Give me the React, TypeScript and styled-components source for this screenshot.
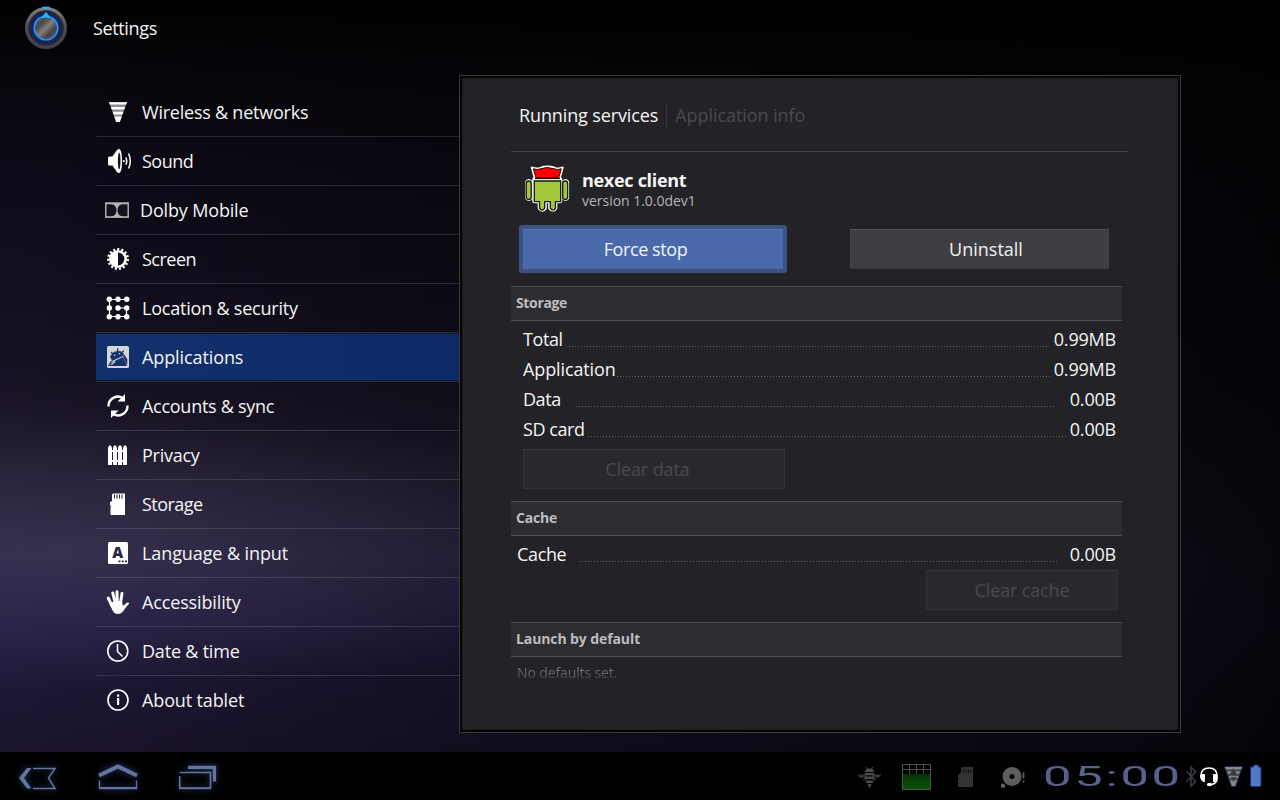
import React from 'react';
import styled, { createGlobalStyle } from 'styled-components';

const Global = createGlobalStyle`
  *{box-sizing:border-box}
  body{margin:0;background:#000;font-family:"Open Sans","Noto Sans",sans-serif;color:#f4f4f4;}
`;

const Screen = styled.div`
  width:1280px;height:800px;display:flex;flex-direction:column;overflow:hidden;
  background:
    radial-gradient(ellipse 680px 140px at 60px 550px,rgba(84,78,112,.36),transparent),
    linear-gradient(90deg,rgba(0,0,0,0) 0,rgba(0,0,0,.08) 120px,rgba(0,0,0,.34) 450px,rgba(0,0,0,.72) 1180px,rgba(0,0,0,.8) 1280px),
    linear-gradient(180deg,#000 0,#07060b 70px,#0e0b19 180px,#171223 380px,#211b30 470px,#27213f 560px,#251d42 620px,#1e1735 690px,#1b142d 752px);
`;

const Header = styled.header`
  height:57px;display:flex;align-items:center;padding:0 0 2px 24px;gap:25px;flex:none;
`;
const HeaderTitle = styled.h1`font-size:18px;font-weight:400;margin:0;line-height:24px;letter-spacing:-.36px;`;

const Main = styled.main`flex:1;display:flex;padding:18px 99px 0 96px;align-items:flex-start;`;
const Nav = styled.nav`width:363px;padding-top:13px;`;
const NavRow = styled.a<{ $on?: boolean }>`
  height:49px;display:flex;align-items:center;padding:0 0 1px 8px;font-size:18px;
  border-bottom:1px solid rgba(255,255,255,.13);
  ${p => p.$on && 'background:linear-gradient(90deg,#12306c,#0b2a66);border-bottom-color:#2b2f42;box-shadow:inset 0 1px #10162a,inset 0 -1px #10162a;'}
  &:last-child{border-bottom:0;}
`;
const NavText = styled.span<{ $shift?: number; $track: number }>`
  margin-left:${p => 10 + (p.$shift || 0)}px;letter-spacing:${p => p.$track}px;line-height:24px;white-space:nowrap;
`;

const Panel = styled.section`
  width:722px;height:658px;border:1px solid #3a3a3c;background:#232327;
  box-shadow:inset 0 0 0 2px #060607,inset 0 0 0 3px #1b1b1e;padding:0 52px 0 51px;
`;
const Tabs = styled.div`
  height:76px;border-bottom:1px solid #434346;display:flex;align-items:center;padding:2px 0 0 8px;
  font-size:18px;line-height:24px;letter-spacing:-.12px;
`;
const Tab = styled.span<{ $dim?: boolean }>`
  color:${p => (p.$dim ? '#4a4a4c' : '#f4f4f4')};
  ${p => p.$dim && 'border-left:1px solid #38383b;padding-left:8px;margin-left:8px;letter-spacing:-.06px;'}
`;
const Body = styled.div`width:611px;`;
const AppHead = styled.div`display:flex;height:73px;padding:12px 0 0 12px;gap:11px;`;
const AppName = styled.div`font-size:18px;font-weight:700;line-height:24px;margin-top:4px;letter-spacing:-.3px;`;
const AppVersion = styled.div`font-size:14px;line-height:18px;color:#b4b4b6;letter-spacing:-.03px;`;

const Button = styled.button<{ $kind: 'focus' | 'plain' | 'off'; $w: number; $nudge?: number; $track?: number }>`
  width:${p => p.$w}px;height:40px;font:inherit;font-size:18px;border:1px solid;display:block;
  padding:0 ${p => Math.max(0, -(p.$nudge || 0))}px 0 ${p => Math.max(0, p.$nudge || 0)}px;
  letter-spacing:${p => p.$track || 0}px;
  ${p => p.$kind === 'focus' && 'background:#4a69ab;color:#f1f3f8;border-color:#5878ad #4c6baa #4c6baa;box-shadow:0 0 0 4px #3b5283;border-radius:1px;outline:0;'}
  ${p => p.$kind === 'plain' && 'background:#3f3e43;color:#f1f1f1;border-color:#525156 #444348 #39383d;'}
  ${p => p.$kind === 'off' && 'background:#29282d;color:#4a4a4c;border-color:#38373b #333237 #333237;'}
`;
const Actions = styled.div`display:flex;justify-content:space-between;padding:4px 13px 0 12px;height:61px;`;
const Section = styled.h2<{ $track?: number }>`
  margin:0;height:35px;border:solid #4e4e51;border-width:1px 0;background:#2d2c30;
  font-size:14px;font-weight:700;color:#bdbdbf;padding-left:5px;line-height:32px;letter-spacing:${p => p.$track ?? -0.22}px;
`;
const Rows = styled.div`padding:3px 6px 0 12px;`;
const Row = styled.div`height:30px;display:flex;font-size:18px;line-height:30px;white-space:nowrap;`;
const Key = styled.span<{ $w: number; $track?: number }>`width:${p => p.$w}px;flex:none;letter-spacing:${p => p.$track ?? -0.35}px;`;
const Dots = styled.i<{ $w: number }>`
  width:${p => p.$w}px;height:1px;margin-top:22px;
  background:repeating-linear-gradient(90deg,#626265 0 1px,transparent 1px 3px);
`;
const Value = styled.span`margin-left:auto;letter-spacing:-.2px;`;
const ClearData = styled.div`padding:5px 0 0 12px;height:57px;`;
const CacheRow = styled.div`padding:3px 6px 1px 6px;`;
const ClearCache = styled.div`display:flex;justify-content:flex-end;padding-right:4px;height:52px;`;
const Note = styled.div`
  font-size:14px;line-height:20px;padding:6px 0 0 6px;height:27px;overflow:hidden;letter-spacing:-.12px;
  color:transparent;background:linear-gradient(180deg,#8a8a8c 8px,#545456 19px,#232327 27px);
  background-clip:text;-webkit-background-clip:text;
`;

const Bar = styled.footer`height:48px;background:#000;display:flex;flex:none;justify-content:space-between;`;
const Keys = styled.div`display:flex;svg{filter:drop-shadow(0 0 3px rgba(50,90,170,.75));}`;
const Status = styled.div`display:flex;`;
const Clock = styled.div`width:144px;height:48px;margin-left:-3px;padding-left:1px;overflow:hidden;`;
const ClockText = styled.span`
  display:block;font-family:Roboto,sans-serif;font-weight:400;font-size:28px;line-height:50px;
  letter-spacing:1.5px;color:#56638a;white-space:nowrap;transform:scaleX(1.81);transform-origin:0 0;
`;

const Glyph = ({ children }: { children: React.ReactNode }) => (
  <svg width="28" height="28" viewBox="0 0 28 28" fill="#fff">{children}</svg>
);

const WifiIcon = () => (
  <Glyph>
    <path d="M5 4h18l-7.200 20h-3.600z" fill="#8c8c92" />
    <path d="M5 4.200h18l-.7 2.300H5.700zM6.800 9h14.400l-.9 2.600H7.700zM8.600 13.800h10.800l-.9 2.600H9.500zM10.200 18.400h7.600l-2 5.600h-3.600z" />
  </Glyph>
);
const SoundIcon = () => (
  <Glyph>
    <path d="M4 11q0-1.500 1.500-1.500H8.500L13 3q1-1 2-1c2 0 3 5.500 3 12s-1 12-3 12q-1 0-2-1L8.500 18.500H5.500Q4 18.500 4 17z" />
    <ellipse cx="15.200" cy="14" rx="1.300" ry="8.500" fill="#15121f" />
    <circle cx="19.800" cy="14" r="1.100" />
    <path d="M21.800 10.500q1.900 3.500 0 7M24.500 6.500q3.600 7.500 0 15" fill="none" stroke="#fff" strokeWidth="1.500" />
  </Glyph>
);
const DolbyIcon = () => (
  <Glyph>
    <rect x="1.500" y="6.800" width="23" height="14.600" fill="#b9b7b6" stroke="#aaa8a8" />
    <path d="M2.500 8.200h4.500c4 0 5.500 3 5.500 6s-1.500 6-5.500 6H2.500zM23.500 8.200H19c-4 0-5.500 3-5.500 6s1.500 6 5.500 6h4.500z" fill="#15121f" />
  </Glyph>
);
const BrightIcon = () => (
  <Glyph>
    <circle cx="14" cy="14" r="9.800" fill="none" stroke="#fff" strokeWidth="2.400" strokeDasharray="2.050 2.050" />
    <circle cx="14" cy="14" r="7.700" fill="none" stroke="#fff" strokeWidth="2.600" />
    <path d="M14 6a8 8 0 0 0 0 16z" />
  </Glyph>
);
const PatternIcon = () => (
  <Glyph>
    <path d="M22.500 5.500H5.500v17h17v-8.500H14" fill="none" stroke="#fff" strokeWidth="1.200" />
    {[5.300, 14, 22.700].map(y => [5.300, 14, 22.700].map(x => <circle key={x + '-' + y} cx={x} cy={y} r="2.700" />))}
  </Glyph>
);
const AppsIcon = () => (
  <Glyph>
    <rect x="3" y="3" width="22" height="22" rx="1.500" fill="#d6d5d5" />
    <path d="M6 13.500l2.300-3.300Q12 7 17.500 8.500L20 11l-1 2L8 18z" fill="#16326c" />
    <path d="M7.500 19.500L19 14l4 8.500-1 .5H5.500z" fill="#16326c" />
    <path d="M20.300 11.500l3 5v5.500l-2-3.500-2.200-5z" fill="#16326c" />
    <path d="M13.700 5.200v3.500M7 9l2 2M19.800 7.800L18 9.500M4.500 23l3-5" stroke="#16326c" strokeWidth="1.200" />
    <path d="M7.500 21.500l3.500-3" stroke="#d6d5d5" strokeWidth="1.200" />
    <circle cx="10.700" cy="12.300" r=".8" fill="#d6d5d5" /><circle cx="15.500" cy="10.800" r=".8" fill="#d6d5d5" />
  </Glyph>
);
const SyncIcon = () => (
  <Glyph>
    <path d="M4.500 14.500A9.500 9.500 0 0 1 20 6.800M23.500 13.500A9.500 9.500 0 0 1 8 21.200" fill="none" stroke="#fff" strokeWidth="2.300" />
    <path d="M21 2v7.500H13.500zM7 26v-7.500H14.500z" />
  </Glyph>
);
const FenceIcon = () => (
  <Glyph>
    {[4, 9, 14, 19].map(x => <path key={x} d={`M${x} 7l1-2.500h2L${x + 4} 7v17h-4z`} />)}
    <path d="M4 9h19v2H4zM4 19h19v2H4z" />
  </Glyph>
);
const CardIcon = () => (
  <Glyph>
    <path d="M9 3.500h12V25H6.500v-8l1-1.200H6V12l2-1V4.500z" />
    <path d="M10.500 4.500v4M13 4.500v4M15.500 4.500v4M18 4.500v4" stroke="#2e2842" strokeWidth="1.100" />
  </Glyph>
);
const LangIcon = () => (
  <Glyph>
    <rect x="4" y="3" width="20" height="22" rx="1.500" />
    <text x="13.700" y="18.800" textAnchor="middle" fontFamily="Open Sans" fontWeight="800" fontSize="15" fill="#2b2546">A</text>
    <path d="M14.500 21.400h2v1.800h-2zM17.800 21.400h2v1.800h-2zM21 21.400h2v1.800h-2z" fill="#2b2546" />
  </Glyph>
);
const HandIcon = () => (
  <Glyph>
    <path d="M4.200 10L8 18M8.800 5l2.300 10M13 3.700l.3 11M18 5.500L16.500 15" stroke="#fff" strokeWidth="3" strokeLinecap="round" fill="none" />
    <path d="M6.300 15.500Q9 13 12 13h6l.8 5 4-3.200q1.800-.8 2.400.8L21 20.500q-3 5.500-7.500 5.500c-4 0-5.500-4-7.200-10.500z" />
  </Glyph>
);
const ClockIcon = () => (
  <Glyph>
    <circle cx="13.800" cy="14" r="10" fill="none" stroke="#fff" strokeWidth="1.600" />
    <path d="M13.500 7v7.500l5 5" fill="none" stroke="#fff" strokeWidth="1.500" />
  </Glyph>
);
const InfoIcon = () => (
  <Glyph>
    <circle cx="14" cy="14" r="10" fill="none" stroke="#fff" strokeWidth="1.600" />
    <rect x="13" y="12" width="2.200" height="7" />
    <rect x="13" y="8.500" width="2.200" height="2.200" />
  </Glyph>
);

const items: { label: string; icon: React.ReactNode; on?: boolean; shift?: number; track: number }[] = [
  { label: 'Wireless & networks', icon: <WifiIcon />, track: -0.23 },
  { label: 'Sound', icon: <SoundIcon />, track: -0.5 },
  { label: 'Dolby Mobile', icon: <DolbyIcon />, shift: -2, track: -0.16 },
  { label: 'Screen', icon: <BrightIcon />, track: -0.5 },
  { label: 'Location & security', icon: <PatternIcon />, track: -0.21 },
  { label: 'Applications', icon: <AppsIcon />, on: true, track: -0.1 },
  { label: 'Accounts & sync', icon: <SyncIcon />, track: -0.27 },
  { label: 'Privacy', icon: <FenceIcon />, track: -0.25 },
  { label: 'Storage', icon: <CardIcon />, track: -0.55 },
  { label: 'Language & input', icon: <LangIcon />, track: -0.1 },
  { label: 'Accessibility', icon: <HandIcon />, track: -0.14 },
  { label: 'Date & time', icon: <ClockIcon />, track: -0.2 },
  { label: 'About tablet', icon: <InfoIcon />, track: -0.13 },
];

const storage = [
  { k: 'Total', v: '0.99MB', start: 46, dots: 479, track: -0.4 },
  { k: 'Application', v: '0.99MB', start: 94, dots: 434, track: -0.12 },
  { k: 'Data', v: '0.00B', start: 53, dots: 479, track: -0.45 },
  { k: 'SD card', v: '0.00B', start: 65, dots: 478, track: -0.45 },
];

const DialIcon = () => (
  <svg width="44" height="44" viewBox="0 0 44 44">
    <defs>
      <linearGradient id="rim" x1="0" y1="0" x2="0" y2="1"><stop offset="0" stopColor="#808184" /><stop offset=".5" stopColor="#4a4a4e" /><stop offset="1" stopColor="#3f4050" /></linearGradient>
      <linearGradient id="knob" x1="0" y1="0" x2="1" y2="1"><stop offset="0" stopColor="#6b6967" /><stop offset=".3" stopColor="#4a4848" /><stop offset=".5" stopColor="#807d7a" /><stop offset=".7" stopColor="#454343" /><stop offset="1" stopColor="#605e5c" /></linearGradient>
    </defs>
    <circle cx="22" cy="22" r="21" fill="url(#rim)" />
    <circle cx="22" cy="22" r="17.300" fill="#1f2440" stroke="#2c2e3c" />
    <circle cx="22" cy="22" r="14.300" fill="#102862" />
    <circle cx="22" cy="22" r="11.700" fill="url(#knob)" stroke="#1f93ff" strokeWidth="1.800" />
    <path d="M22 6.500l4 5.200q-4-1.600-8 0z" fill="#1fb4ff" stroke="#1fb4ff" />
    <path d="M18.200 2q3.800-.8 7.600 0" stroke="#27b6f5" strokeWidth="2" fill="none" />
  </svg>
);

const DroidIcon = () => (
  <svg width="48" height="50" viewBox="0 0 48 50">
    <g stroke="#fff" strokeLinejoin="round" fill="#fff">
      <path d="M8.800 3.500l3 11h24.800L39.700 3.500q-5 2-8 .3Q24 1.300 17.300 3.900q-3 1.500-8.500-.4z" strokeWidth="2" />
      <path d="M11.500 15.500h25.500v21.500h-5v7q-2.300 3-4.500 0v-7h-6v7q-2.300 3-4.500 0v-7H11.500z" strokeWidth="4.600" />
      <path d="M4.200 18q1.600-2 3.200 0v16q-1.600 2-3.200 0zM40.900 18q1.600-2 3.200 0v16q-1.600 2-3.200 0z" strokeWidth="4" />
    </g>
    <path d="M10.400 4.800l2.700 9.200h22.600L38.300 4.800q-4 1.500-7 0Q24 2.300 17.500 4.800q-3 1.500-7.100 0z" fill="#f00" stroke="#300" />
    <path d="M12 14.500h25" stroke="#111" strokeWidth="1.200" />
    <g fill="#a4c639" stroke="#151515" strokeWidth="1.300">
      <path d="M11.300 17h26.400v20.700h-5.200v6.500q-2.600 4-5.200 0v-6.500h-5.600v6.500q-2.600 4-5.200 0v-6.500h-5.200z" />
      <rect x="3.200" y="17" width="5" height="18.500" rx="2.500" /><rect x="39.700" y="17" width="5" height="18.500" rx="2.500" />
    </g>
  </svg>
);

const NavKeys = () => (
  <svg width="240" height="48" viewBox="0 0 240 48" fill="none" stroke="#66739a">
    <path d="M27 16h4.500L24 26l7.500 10.500H27L19 26z" fill="#66739a" stroke="none" />
    <path d="M33 16.500h22L48.500 26 55 36.500H33" strokeWidth="1.500" />
    <path d="M99 23.500L118 14.500l19 9" strokeWidth="4" />
    <path d="M99.500 28.500v8h37v-8" strokeWidth="1.400" />
    <path d="M99.500 36h37" strokeWidth="2" />
    <path d="M188 15.300h26.500V29.500" strokeWidth="3.200" />
    <path d="M179.500 20.500h31v16M179.700 24v12" strokeWidth="1.600" />
    <path d="M179 36.200h32" strokeWidth="2" />
  </svg>
);

const Notifications = () => (
  <svg width="190" height="48" viewBox="855 752 190 48">
    <defs><linearGradient id="load" x1="0" y1="0" x2="0" y2="1"><stop offset="0" stopColor="#063306" /><stop offset="1" stopColor="#075407" /></linearGradient></defs>
    <g fill="#4c4c4c">
      <path d="M865 772q0-3.500 4.500-3.500t4.500 3.500z" />
      <path d="M866 767l1.500 2M873 767l-1.500 2" stroke="#4c4c4c" />
      <path d="M857 774.500h9v2.500l-6 1zM881.500 774.500h-9v2.500l6 1zM862 780l4-3v3zM877 780l-4-3v3z" fill="#343434" />
      <path d="M865 773h9v2.200h-9zM865 776.500h9v2.500h-9zM865.500 780.500h8l-1 2.500h-6zM867.300 784.300h4.400l-2.200 4z" />
    </g>
    <rect x="902.500" y="774" width="28" height="15.500" fill="url(#load)" />
    <path d="M902.500 764.500h28v25h-28zM902.500 769.500h28M909.500 764.500v9.500M916.500 764.500v9.500M923.500 764.500v9.500" fill="none" stroke="#505050" />
    <path d="M962 767h11v20h-15v-7l1-2h-1v-3l3-2v-5z" fill="#333" />
    <path d="M963.500 769v4M966 769v4M968.500 769v4M971 769v4" stroke="#111" />
    <circle cx="1012" cy="776.500" r="6" fill="none" stroke="#5e5e5e" strokeWidth="7" />
    <circle cx="1003" cy="785.700" r="2.200" fill="#5e5e5e" />
    <path d="M1023.500 772.500v6M1023.500 780.500v2" stroke="#5e5e5e" strokeWidth="1.800" />
  </svg>
);

const Radios = () => (
  <svg width="94" height="48" viewBox="1186 752 94 48">
    <path d="M1186.500 771l9 10.500-4.500 4.500v-19l4.500 4.500-9 10.500" stroke="#3c3e49" strokeWidth="1.500" fill="none" />
    <path d="M1201 778v-2q0-8 8-8t8 8v2q0 5-5 6.500" stroke="#fff" strokeWidth="1.600" fill="none" />
    <path d="M1201 774.500h3.500v7H1203q-1.500-1-2-3zM1217 774.500h-3.500v7h1.500q1.500-1 2-3z" fill="#fff" stroke="#fff" strokeLinejoin="round" />
    <ellipse cx="1209.500" cy="784.500" rx="2.700" ry="1.800" fill="#fff" />
    <path d="M1225 767h17l-6.500 19h-4z" fill="#3b3d45" stroke="#1c3466" strokeWidth="1.500" />
    <path d="M1225 767h17l-1 2.600h-15zM1227 771.300h13l-1 2.700h-11zM1228.500 775.700h10l-.9 2.700h-8.200zM1230 780h7l-2 6h-3z" fill="#8b8a88" />
    <path d="M1233.500 768l3.500 6h-7zM1233.500 782l3-5h-6z" fill="#3b3b40" />
    <path d="M1250.500 767h3v-2h5v2h2.500v19.500h-10.500z" fill="#5079c8" stroke="#172d5c" strokeWidth="1" />
  </svg>
);

export default function App() {
  return (
    <Screen>
      <Global />
      <Header><DialIcon /><HeaderTitle>Settings</HeaderTitle></Header>
      <Main>
        <Nav>
          {items.map(i => (
            <NavRow key={i.label} $on={i.on}>{i.icon}<NavText $shift={i.shift} $track={i.track}>{i.label}</NavText></NavRow>
          ))}
        </Nav>
        <Panel>
          <Tabs><Tab>Running services</Tab><Tab $dim>Application info</Tab></Tabs>
          <Body>
            <AppHead>
              <DroidIcon />
              <div><AppName>nexec client</AppName><AppVersion>version 1.0.0dev1</AppVersion></div>
            </AppHead>
            <Actions>
              <Button $kind="focus" $w={260} $nudge={-15} $track={-0.4}>Force stop</Button>
              <Button $kind="plain" $w={259} $nudge={13}>Uninstall</Button>
            </Actions>
            <Section $track={-0.35}>Storage</Section>
            <Rows>
              {storage.map(r => (
                <Row key={r.k}><Key $w={r.start} $track={r.track}>{r.k}</Key><Dots $w={r.dots} /><Value>{r.v}</Value></Row>
              ))}
            </Rows>
            <ClearData><Button $kind="off" $w={262} $nudge={-13} $track={-0.1} disabled>Clear data</Button></ClearData>
            <Section>Cache</Section>
            <CacheRow><Row><Key $w={62}>Cache</Key><Dots $w={478} /><Value>0.00B</Value></Row></CacheRow>
            <ClearCache><Button $kind="off" $w={192} $track={-0.15} disabled>Clear cache</Button></ClearCache>
            <Section $track={-0.1}>Launch by default</Section>
            <Note>No defaults set.</Note>
          </Body>
        </Panel>
      </Main>
      <Bar>
        <Keys><NavKeys /></Keys>
        <Status><Notifications /><Clock><ClockText>05:00</ClockText></Clock><Radios /></Status>
      </Bar>
    </Screen>
  );
}
